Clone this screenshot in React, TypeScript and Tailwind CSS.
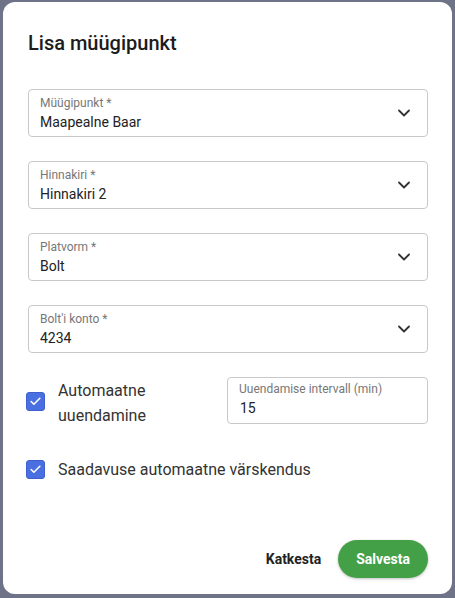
import { ChevronDown, Check } from 'lucide-react'

const selects = [
  { label: 'Müügipunkt *', value: 'Maapealne Baar' },
  { label: 'Hinnakiri *', value: 'Hinnakiri 2' },
  { label: 'Platvorm *', value: 'Bolt' },
  { label: "Bolt'i konto *", value: '4234' },
]

function Checkbox() {
  return (
    <span className="flex h-[19px] w-[19px] shrink-0 items-center justify-center rounded-[3px] bg-[#4a6fe0] border border-[#3d5fcf]">
      <Check size={13} strokeWidth={3} className="text-white" />
    </span>
  )
}

export default function App() {
  return (
    <div
      className="min-h-[598px] bg-[#6f7388] pt-[2px] px-[3px]"
      style={{ fontFamily: 'Roboto, "Noto Sans", sans-serif' }}
    >
      <div className="flex h-[592px] flex-col rounded-[12px] bg-white pt-[27px] pl-[25px] pr-6 pb-4">
        <h2 className="text-[20px] leading-[28px] font-medium text-[#1c1c1c]">Lisa müügipunkt</h2>

        <div className="mt-[32px] flex flex-col gap-6">
          {selects.map((s) => (
            <div
              key={s.label}
              className="flex h-[48px] items-center rounded-[4px] border border-[#c8c8c8] pl-[11px] pr-[13px]"
            >
              <div className="flex-1 pt-[1px]">
                <div className="text-[12px] leading-[16px] text-[#777]">{s.label}</div>
                <div className="mt-px text-[14px] leading-[20px] text-[#222]">{s.value}</div>
              </div>
              <ChevronDown size={20} strokeWidth={2.2} className="text-[#333]" />
            </div>
          ))}
        </div>

        <div className="mt-6 flex items-start">
          <label className="flex w-[199px] items-center gap-[13px] pt-[1px]">
            <span className="-ml-[2px] -mt-[3px]">
              <Checkbox />
            </span>
            <span className="text-[16px] leading-[25px] text-[#333]">
              Automaatne
              <br />
              uuendamine
            </span>
          </label>
          <div className="flex h-[47px] flex-1 flex-col rounded-[4px] border border-[#c8c8c8] pl-[11px] pt-[3px]">
            <div className="text-[12px] leading-[16px] text-[#777]">Uuendamise intervall (min)</div>
            <div className="mt-px pl-[1px] text-[14px] leading-[20px] text-[#222]">15</div>
          </div>
        </div>

        <label className="mt-[29px] flex items-center gap-[13px]">
          <span className="-ml-[2px]">
            <Checkbox />
          </span>
          <span className="text-[16px] leading-[25px] text-[#333]">Saadavuse automaatne värskendus</span>
        </label>

        <div className="mt-auto flex items-center justify-end gap-[9px]">
          <button className="px-2 py-2 text-[14px] font-bold text-[#222]">Katkesta</button>
          <button className="h-[38px] rounded-full bg-[#43a047] px-[18px] text-[14px] font-bold text-white shadow-[0_1px_3px_rgba(0,0,0,0.25)]">
            Salvesta
          </button>
        </div>
      </div>
    </div>
  )
}
